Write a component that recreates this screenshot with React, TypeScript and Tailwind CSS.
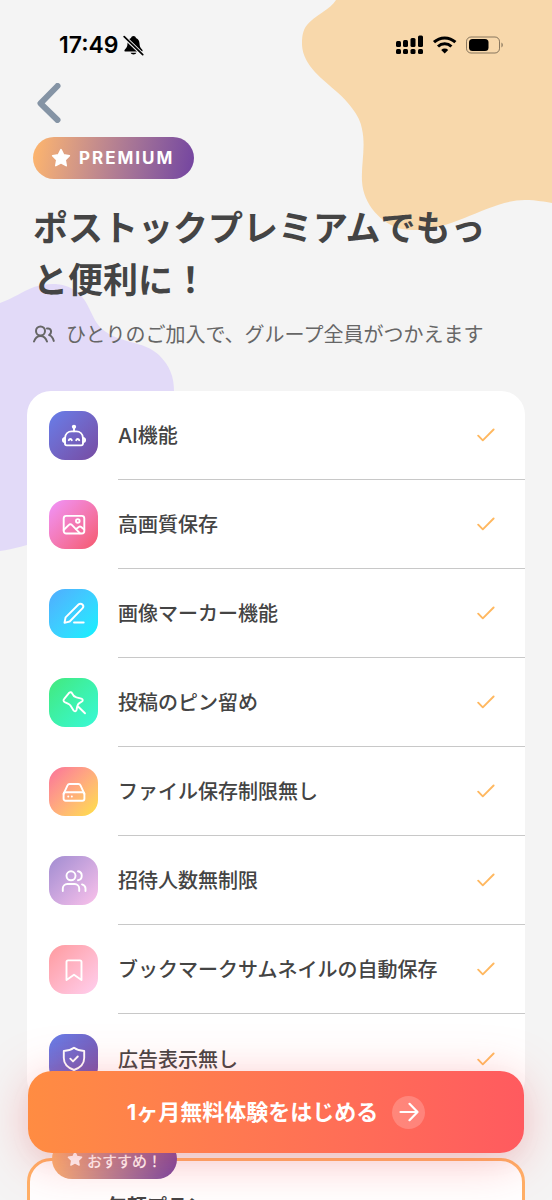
import type { ReactNode } from "react";

type Feature = {
  label: string;
  tile: string;
  icon: ReactNode;
};

const FEATURES: Feature[] = [
  {
    label: "AI機能",
    tile: "from-[#667eea] to-[#764ba2]",
    icon: (
      <>
        <path d="M3 14.200C3.200 9.800 6.200 7.400 9.800 7.400h4.400c3.600 0 6.600 2.400 6.800 6.800v5.400a1.800 1.800 0 0 1-1.800 1.800H4.800A1.800 1.800 0 0 1 3 19.600z" />
        <path d="M3 14c-1.300.1-2.100.9-2.100 2.100S1.700 18.100 3 18.200M21 14c1.300.1 2.100.9 2.100 2.100s-.8 2-2.100 2.100M12 7.200V4" />
        <path d="M6.800 16.200c.5-1.600 2.500-1.600 3 0M14.200 16.200c.5-1.600 2.500-1.600 3 0" />
        <circle cx="12" cy="2.800" r="1.200" fill="currentColor" />
      </>
    ),
  },
  {
    label: "高画質保存",
    tile: "from-[#f093fb] to-[#f5576c]",
    icon: (
      <>
        <rect x="1.700" y="2.900" width="20.600" height="17.600" rx="2.500" />
        <circle cx="15.800" cy="7.900" r="1.800" />
        <path d="M1.700 17l5.200-5.200a2 2 0 0 1 2.900 0l8 8.400M13.800 16.200l3-2.200a2 2 0 0 1 2.400.1l3 2.500" />
      </>
    ),
  },
  {
    label: "画像マーカー機能",
    tile: "from-[#4facfe] to-[#00f2fe]",
    icon: (
      <>
        <path d="M2.500 20.800l1.100-5.500L16.500 2.500a2.700 2.700 0 0 1 3.900 3.900L7.700 19.500z" />
        <path d="M12 20.500h9.700" />
      </>
    ),
  },
  {
    label: "投稿のピン留め",
    tile: "from-[#43e97b] to-[#38f9d7]",
    icon: (
      <>
        <path d="M7.300 1.700c1-.9 2.300-.6 2.800.6.8 2.100 2.100 3.300 4.400 4l4.800 1.300c1.700.5 1.900 2 .6 2.900l-2.600 1.600c-1.300.8-1.700 1.800-2 3.200l-.8 3.700c-.4 1.400-2 1.700-2.900.5l-3-4.700c-.6-.9-1.300-1.500-2.200-1.900l-3.700-1.700c-1.400-.7-1.500-2.200-.5-3.300z" />
        <path d="M16.300 15.800l6.700 6.500" />
      </>
    ),
  },
  {
    label: "ファイル保存制限無し",
    tile: "from-[#fa709a] to-[#fee140]",
    icon: (
      <>
        <path d="M1.600 13.800L5.500 5.300A2.300 2.300 0 0 1 7.600 4h8.800a2.300 2.300 0 0 1 2.100 1.300l3.900 8.500" />
        <rect x="1.600" y="12.300" width="20.800" height="8.400" rx="2" />
        <path d="M6.200 16.500h.1M9.800 16.500h.1" />
      </>
    ),
  },
  {
    label: "招待人数無制限",
    tile: "from-[#a18cd1] to-[#fbc2eb]",
    icon: (
      <>
        <circle cx="9" cy="6.800" r="4.500" />
        <path d="M.8 22v-2.500a4.500 4.500 0 0 1 4.500-4.500h7.400a4.500 4.500 0 0 1 4.500 4.500V22" />
        <path d="M16 2.300c5 .8 5 8.200 0 9M20 15.400c2.500.8 3.500 2 3.500 4.100V22" />
      </>
    ),
  },
  {
    label: "ブックマークサムネイルの自動保存",
    tile: "from-[#ff9a9e] to-[#fecfef]",
    icon: <path d="M4.500 22V4a1.600 1.600 0 0 1 1.600-1.600h11.800A1.600 1.600 0 0 1 19.500 4v18L12 16.800z" />,
  },
  {
    label: "広告表示無し",
    tile: "from-[#667eea] to-[#764ba2]",
    icon: (
      <>
        <path d="M12 .8c2.800 2 6.200 3.100 10.200 3.200v7c0 5.500-4 9.800-10.200 12C5.800 20.800 1.800 16.500 1.800 11V4C5.800 3.900 9.200 2.800 12 .8z" />
        <path d="M8.300 11.700l2.700 2.700 4.800-4.900" />
      </>
    ),
  },
];

function Star({ className }: { className: string }) {
  return (
    <svg viewBox="0 0 24 24" className={className} fill="currentColor" stroke="currentColor" strokeWidth="2" strokeLinejoin="round" aria-hidden="true">
      <path d="M12 2l3.100 6.300 6.900 1-5 4.900 1.200 6.900L12 17.800l-6.200 3.300L7 14.200 2 9.300l6.900-1z" />
    </svg>
  );
}

function Background() {
  return (
    <div className="absolute inset-0 overflow-hidden" aria-hidden="true">
      <svg width="250" height="232" viewBox="302 0 250 232" className="absolute top-0 right-0">
        <path
          fill="#f8d8ab"
          d="M336 0C331 9 314 16 307 25C302 31 302 39 302 45C303 66 324 80 337 92C347 101 360 115 362 129C366 147 361 165 362 181C363 204 381 224 402 229C448 236 487 200 525 200C537 200 545 202 552 203V0Z"
        />
      </svg>
      <svg width="175" height="270" viewBox="0 283 175 270" className="absolute top-[283px] left-0">
        <path
          fill="#e2daf8"
          d="M0 303C14 298 23 291 34 287C50 282 66 283 77 292C90 302 91 319 102 329C119 344 143 340 159 355C170 366 174 377 174 391C174 430 120 475 80 515C58 537 27 547 0 551Z"
        />
      </svg>
    </div>
  );
}

function StatusBar() {
  return (
    <div className="flex h-7 items-center justify-between pr-[15px] pl-[26px] text-black">
      <div className="flex items-center gap-1">
        <span className="font-[Inter,sans-serif] text-[23px] font-semibold">17:49</span>
        <svg width="21" height="21" viewBox="0 0 21 21" aria-hidden="true">
          <path d="M10.500 1c-1.300 0-2.200.8-2.500 1.900C5.500 3.800 4.600 6 4.500 8.500c-.1 3-.9 4.300-2.600 5.900-.9.900-.5 2.100.7 2.100h15.800c1.200 0 1.600-1.200.7-2.100-1.700-1.600-2.500-2.900-2.600-5.900-.1-2.500-1-4.700-3.500-5.600C12.700 1.800 11.800 1 10.500 1zM7.500 17.700a3.200 2.800 0 0 0 6 0z" />
          <path d="M1.500 2.200L19.500 19.500" stroke="#f4f4f4" strokeWidth="3.800" />
          <path d="M1.200 1.700L19.700 19.700" stroke="currentColor" strokeWidth="1.700" strokeLinecap="round" />
        </svg>
      </div>
      <svg width="109" height="20" viewBox="0 0 109 20" aria-hidden="true">
        <rect x="1" y="6" width="5" height="6" rx="1.500" />
        <rect x="8" y="5" width="5" height="7" rx="1.500" />
        <rect x="15.500" y="3" width="5" height="9" rx="1.500" />
        <rect x="23" y="0.500" width="5" height="11.500" rx="1.500" />
        <rect x="1" y="14" width="5" height="5" rx="1.500" />
        <rect x="8" y="14" width="5" height="5" rx="1.500" />
        <rect x="15.500" y="14" width="5" height="5" rx="1.500" />
        <rect x="23" y="14" width="5" height="5" rx="1.500" />
        <g fill="none" stroke="currentColor" strokeWidth="3">
          <path d="M39 7.200a15.500 15.500 0 0 1 21.400 0" />
          <path d="M43 11.500a9.700 9.700 0 0 1 13.400 0" />
        </g>
        <path d="M46.200 14.900a5 5 0 0 1 7 0L49.700 18.500z" />
        <rect x="71.500" y="2" width="33" height="16" rx="4.500" fill="none" stroke="#000" strokeOpacity="0.450" />
        <rect x="74" y="4" width="19.500" height="12" rx="3.500" />
        <path d="M106.500 7.500c1.600.8 1.600 4.200 0 5z" fillOpacity="0.500" />
      </svg>
    </div>
  );
}

function FeatureRow({ label, tile, icon }: Feature) {
  return (
    <li className="group flex h-[89px] items-center gap-5 pl-[22px]">
      <span className={`flex size-[49px] shrink-0 items-center justify-center rounded-2xl bg-linear-135 text-white ${tile}`}>
        <svg viewBox="0 0 24 24" className="size-6 overflow-visible" fill="none" stroke="currentColor" strokeWidth="1.900" strokeLinecap="round" strokeLinejoin="round" aria-hidden="true">
          {icon}
        </svg>
      </span>
      <div className="flex h-full flex-1 items-center justify-between border-b border-[#c8c8c8] pr-[30px] group-last:border-b-0">
        <span className="pt-0.5 text-[20px] font-medium whitespace-nowrap">{label}</span>
        <svg width="18" height="14" viewBox="0 0 18 14" className="shrink-0" fill="none" stroke="#ffb860" strokeWidth="1.900" strokeLinecap="round" strokeLinejoin="round" aria-hidden="true">
          <path d="M1.200 7.700L5.800 12.300 16.600 1.500" />
        </svg>
      </div>
    </li>
  );
}

export default function App() {
  return (
    <div className="relative h-screen overflow-hidden bg-[#f4f4f4] font-[Inter,'Noto_Sans_CJK_JP',sans-serif] text-[#444]">
      <Background />

      <main className="relative h-full overflow-y-auto px-[27px] pt-[31px] pb-40 [scrollbar-width:none]">
        <header className="px-1.5">
          <StatusBar />
          <button type="button" aria-label="戻る" className="mt-6 block px-1 text-[#8594a5]">
            <svg width="24" height="40" viewBox="0 0 24 40" fill="none" stroke="currentColor" strokeWidth="6" strokeLinecap="round" strokeLinejoin="round">
              <path d="M20.500 3L3.500 20.300 20.500 37" />
            </svg>
          </button>

          <div className="mt-3.5 inline-flex h-[42px] items-center gap-2 rounded-full bg-linear-100 from-[#ffb66b] to-[#7343a0] pr-5 pl-[18px] text-white">
            <Star className="size-5" />
            <span className="pt-0.5 font-[Inter,sans-serif] text-[17px] font-bold tracking-[2px]">PREMIUM</span>
          </div>

          <h1 className="mt-[23px] text-[35px] leading-[52px] font-bold">ポストックプレミアムでもっと便利に！</h1>

          <p className="mt-[15px] flex h-7 items-center gap-[11px] text-[20px] whitespace-nowrap text-[#666]">
            <svg width="22" height="20" viewBox="0 0 22 20" className="shrink-0" fill="none" stroke="currentColor" strokeWidth="2" strokeLinecap="round" strokeLinejoin="round" aria-hidden="true">
              <circle cx="7.500" cy="6" r="4.500" />
              <path d="M1 16.500c1.300-3.700 3.600-5.500 6.500-5.500s5.200 1.800 6.500 5.500M14 3.500c4.200-.8 5.400 4 2.200 6.600 2.200.6 3.700 2.600 4.600 5.800" />
            </svg>
            ひとりのご加入で、グループ全員がつかえます
          </p>
        </header>

        <ul className="mt-[42px] rounded-3xl bg-white">
          {FEATURES.map((f) => (
            <FeatureRow key={f.label} {...f} />
          ))}
        </ul>

        <section className="relative mt-[55px] rounded-3xl border-3 border-[#ffb066] bg-white px-[77px] pt-8 pb-8">
          <div className="absolute -top-[22px] left-[22px] flex h-10 items-center gap-1 rounded-full bg-linear-100 from-[#ffb66b] to-[#7343a0] px-[15px] text-[15px] font-medium whitespace-nowrap text-white">
            <Star className="size-4" />
            <span className="pt-1.5">おすすめ！</span>
          </div>
          <h2 className="text-[20px] leading-7 font-bold">年額プラン</h2>
        </section>
      </main>

      <div className="absolute inset-x-0 bottom-[47px] px-7">
        <button
          type="button"
          className="flex h-[82px] w-full items-center justify-center gap-3.5 rounded-3xl bg-linear-to-r from-[#ff8c42] to-[#ff5a5f] text-[22px] font-bold text-white shadow-[0_8px_50px_rgba(255,90,95,0.35),0_8px_24px_rgba(0,0,0,0.04)]"
        >
          <span>1ヶ月無料体験をはじめる</span>
          <span className="flex size-[33px] items-center justify-center rounded-full bg-white/20">
            <svg width="20" height="20" viewBox="0 0 20 20" fill="none" stroke="currentColor" strokeWidth="2.200" strokeLinecap="round" strokeLinejoin="round" aria-hidden="true">
              <path d="M1.500 10h17M10.500 1.800L18.500 10l-8 8.200" />
            </svg>
          </span>
        </button>
      </div>
    </div>
  );
}
